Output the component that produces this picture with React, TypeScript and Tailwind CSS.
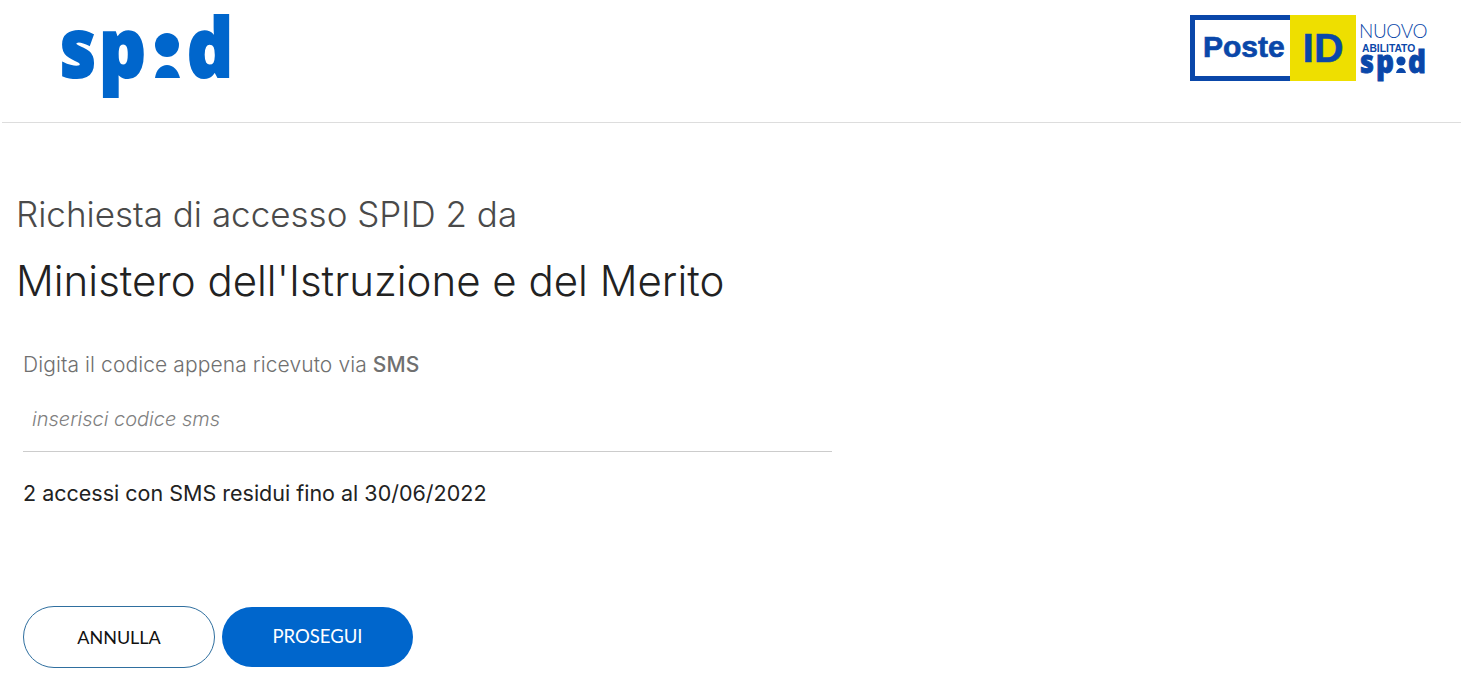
const sans = "font-['Inter','Lato',sans-serif]";

function SpidLogo() {
  return (
    <svg width="172" height="90" viewBox="0 0 172 90" className="block">
      <g fontFamily="'Open Sans', sans-serif" fontWeight="800" fontSize="82" fill="#0066cc" stroke="#0066cc" strokeWidth="2">
        <text x="-1" y="64" textLength="36" lengthAdjust="spacingAndGlyphs">s</text>
        <text x="38" y="64" textLength="47" lengthAdjust="spacingAndGlyphs">p</text>
        <text x="126" y="64" textLength="46" lengthAdjust="spacingAndGlyphs">d</text>
      </g>
      <circle cx="106" cy="32" r="12" fill="#0066cc" />
      <path d="M94 65 C95 57 100 52 106 52 C112 52 117 57 119 65 Z" fill="#0066cc" />
    </svg>
  );
}

function SmallSpid() {
  return (
    <svg width="68" height="34" viewBox="0 0 68 34" className="block">
      <g fontFamily="'Open Sans', sans-serif" fontWeight="800" fontSize="31" fill="#0a47a9" stroke="#0a47a9" strokeWidth="0.8">
        <text x="1" y="25" textLength="14" lengthAdjust="spacingAndGlyphs">s</text>
        <text x="17" y="25" textLength="18" lengthAdjust="spacingAndGlyphs">p</text>
        <text x="49" y="25" textLength="18" lengthAdjust="spacingAndGlyphs">d</text>
      </g>
      <circle cx="42" cy="13" r="4.6" fill="#0a47a9" />
      <path d="M37 25 C37.5 22 39.5 20 42 20 C44.5 20 46.5 22 47 25 Z" fill="#0a47a9" />
    </svg>
  );
}

function PosteIdLogo() {
  return (
    <div className="flex h-[66px] items-stretch">
      <div className="flex w-[100px] items-center border-y-[5px] border-l-[5px] border-[#0a47a9] pb-[3px] pl-[8px]">
        <span className="font-['Liberation_Sans',sans-serif] text-[30px] font-bold leading-none text-[#0a47a9] [-webkit-text-stroke:0.7px_#0a47a9]">Poste</span>
      </div>
      <div className="flex w-[66px] items-center justify-center bg-[#eedf00]">
        <span className="font-['Liberation_Sans',sans-serif] text-[41px] font-bold leading-none text-[#0a47a9] [-webkit-text-stroke:0.5px_#0a47a9]">ID</span>
      </div>
      <div className="ml-[3px] flex w-[70px] flex-col pt-[6px]">
        <span className="font-['Lato',sans-serif] text-[19px] font-light leading-[20px] tracking-[-0.4px] text-[#0a47a9]">NUOVO</span>
        <span className="mt-[3px] pl-[3px] font-['Liberation_Sans',sans-serif] text-[10.3px] font-bold leading-[10px] text-[#0a47a9]">ABILITATO</span>
        <div className="mt-[-6px]">
          <SmallSpid />
        </div>
      </div>
    </div>
  );
}

export default function App() {
  return (
    <div className={`min-h-[684px] bg-white ${sans}`}>
      <header className="ml-[2px] mr-[10px] flex h-[123px] items-start justify-between border-b border-[#dddddd] pl-[59px] pr-[32px]">
        <div className="pt-[13px]">
          <SpidLogo />
        </div>
        <div className="pt-[15px]">
          <PosteIdLogo />
        </div>
      </header>

      <main className="pl-[16px] pt-[70px]">
        <h2 className="text-[35px] font-light leading-[42px] text-[#4a4a4a]">Richiesta di accesso SPID 2 da</h2>
        <h1 className="mt-[21px] text-[42px] font-light leading-[50px] text-[#222222]">Ministero dell'Istruzione e del Merito</h1>

        <div className="ml-[7px] mt-[47px] w-[809px]">
          <p className="text-[21px] font-light leading-[24px] tracking-[0.1px] text-[#707070]">
            Digita il codice appena ricevuto via <span className="font-medium text-[#707070]">SMS</span>
          </p>
          <div className="mt-[10px] flex h-[65px] items-center border-b border-[#cccccc] pl-[9px]">
            <input
              placeholder="inserisci codice sms"
              className="w-full bg-transparent text-[20px] font-light italic text-[#808080] outline-none placeholder:text-[#808080]"
            />
          </div>
          <p className="mt-[28px] text-[21.5px] leading-[26px] text-[#222222]">2 accessi con SMS residui fino al 30/06/2022</p>

          <div className="mt-[100px] flex items-center gap-[7px]">
            <button type="button" className="h-[62px] w-[192px] rounded-full border border-[#2f6f9f] bg-white font-['Lato',sans-serif] text-[18px] text-[#111111]">
              ANNULLA
            </button>
            <button type="button" className="h-[60px] w-[191px] rounded-full bg-[#0066cc] font-['Lato',sans-serif] text-[18.5px] text-white">
              PROSEGUI
            </button>
          </div>
        </div>
      </main>
    </div>
  );
}
